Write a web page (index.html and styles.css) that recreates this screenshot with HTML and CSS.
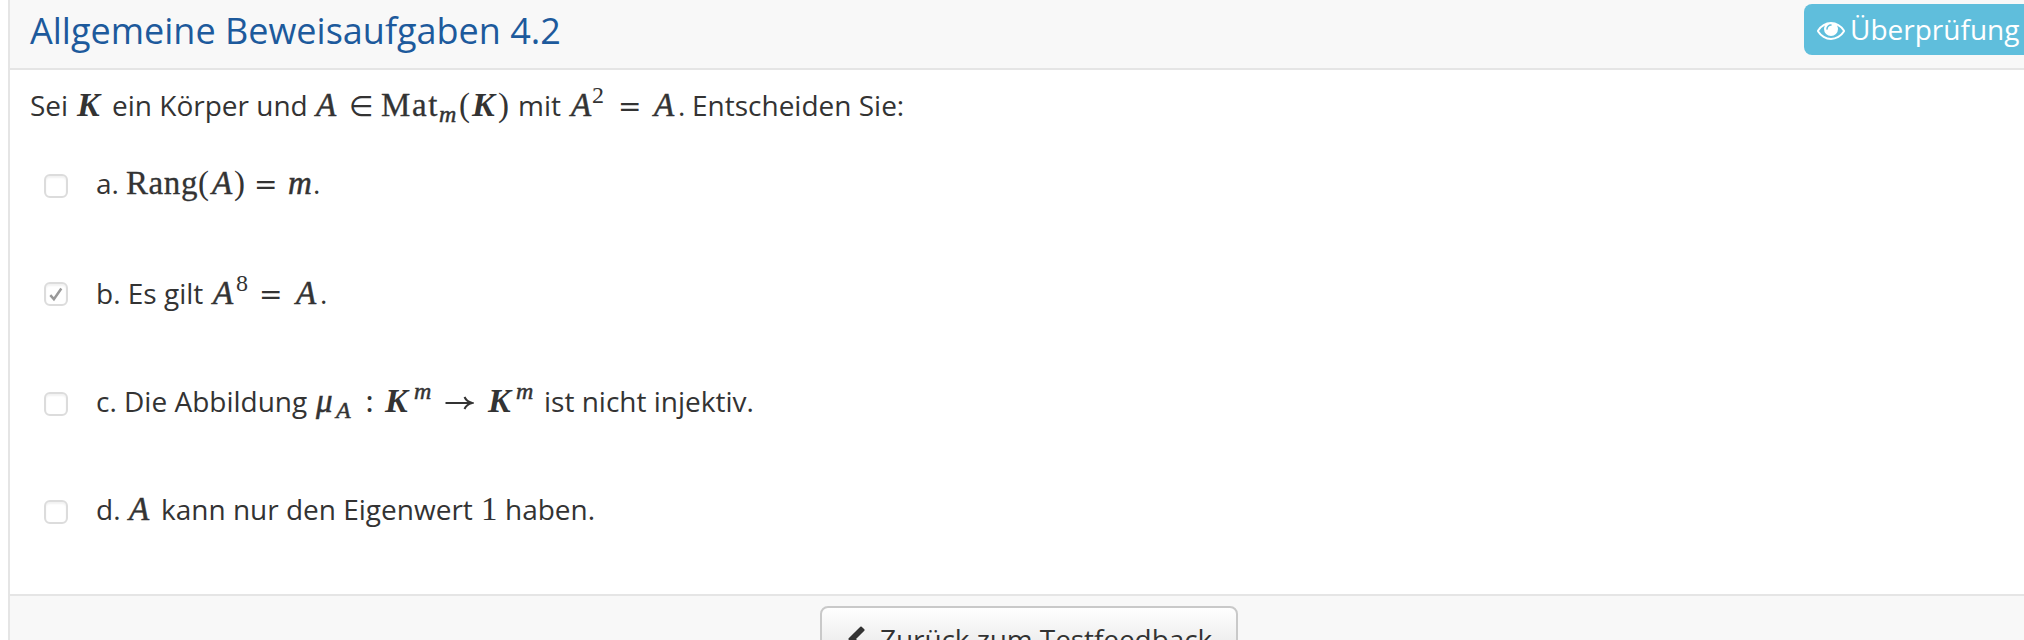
FILE: index.html
```html
<!DOCTYPE html>
<html lang="de">
<head>
<meta charset="utf-8">
<title>Allgemeine Beweisaufgaben 4.2</title>
<link rel="stylesheet" href="styles.css">
</head>
<body>
<main class="panel">
  <header class="panel-head">
    <h1 class="title">Allgemeine Beweisaufgaben 4.2</h1>
    <a class="review"><svg class="eye" viewBox="0 0 1792 1792"><path d="M1664 960q-152-236-381-353 61 104 61 225 0 185-131.5 316.5t-316.5 131.5-316.5-131.5-131.5-316.5q0-121 61-225-229 117-381 353 133 205 333.5 326.5t434.5 121.5 434.5-121.5 333.5-326.5zm-720-384q0-20-14-34t-34-14q-125 0-214.5 89.5t-89.5 214.5q0 20 14 34t34 14 34-14 14-34q0-86 61-147t147-61q20 0 34-14t14-34zm848 384q0 34-20 69-140 230-376.5 368.5t-499.5 138.5-499.5-139-376.5-368q-20-35-20-69t20-69q140-229 376.5-368t499.5-139 499.5 139 376.5 368q20 35 20 69z"/></svg><span class="review-label">Überprüfung</span></a>
  </header>
  <section class="panel-body">
    <p class="line intro"><span>Sei</span><i class="k">K</i><span>ein Körper und</span><i>A</i><b class="op in">∈</b><b class="word mat">Mat</b><i class="sub">m</i><b>(</b><i class="k">K</i><b>)</b><span>mit</span><i>A</i><b class="sup">2</b><b class="op">=</b><i>A</i><span>.</span><span>Entscheiden Sie:</span></p>
    <div class="option"><span class="box"></span>
      <p class="line opt-a"><span>a.</span><b class="word">Rang</b><b>(</b><i>A</i><b>)</b><b class="op">=</b><i>m</i><span>.</span></p></div>
    <div class="option"><span class="box"><svg class="check" viewBox="0 0 24 24"><path d="M6.3 13.2L9.9 17.2L17.3 6.5"/></svg></span>
      <p class="line opt-b"><span>b. Es gilt</span><i>A</i><b class="sup">8</b><b class="op">=</b><i>A</i><span>.</span></p></div>
    <div class="option"><span class="box"></span>
      <p class="line opt-c"><span>c. Die Abbildung</span><i>μ</i><i class="sub">A</i><b>:</b><i class="k">K</i><i class="sup">m</i><svg class="arrow" viewBox="0 0 28 16"><path d="M0 8H26M19 2Q21 6.500 26.500 8Q21 9.500 19 14"/></svg><i class="k">K</i><i class="sup">m</i><span>ist nicht injektiv.</span></p></div>
    <div class="option"><span class="box"></span>
      <p class="line opt-d"><span>d.</span><i>A</i><span>kann nur den Eigenwert</span><b>1</b><span>haben.</span></p></div>
  </section>
  <footer class="panel-foot">
    <a class="back"><svg class="chevron" viewBox="0 0 1792 1792"><path d="M1427 301l-531 531 531 531q19 19 19 45t-19 45l-166 166q-19 19-45 19t-45-19l-742-742q-19-19-19-45t19-45l742-742q19-19 45-19t45 19l166 166q19 19 19 45t-19 45z"/></svg><span class="back-label">Zurück zum Testfeedback</span></a>
  </footer>
</main>
</body>
</html>
```
FILE: styles.css
```css
* { box-sizing: border-box; }
html, body { margin: 0; height: 640px; overflow: hidden; background: #fff; }
body { padding-left: 8px; font-family: "Open Sans", "Noto Sans", sans-serif; font-size: 28px; color: #333; }
.panel { height: 640px; border-left: 2px solid #e5e5e5; display: flex; flex-direction: column; overflow: hidden; }
.panel-head { flex: none; height: 70px; background: #f8f8f8; border-bottom: 2px solid #e5e5e5; display: flex; justify-content: space-between; align-items: flex-start; padding: 4px 0 0 20px; }
.title { margin: 0; font-size: 36px; line-height: 53px; font-weight: 400; color: #1d5a9c; white-space: nowrap; }
.review { width: 220px; flex: none; height: 51px; border-radius: 8px 0 0 8px; background: #5fbedc; color: #fff; display: flex; align-items: center; padding-left: 13px; }
.eye { width: 28px; height: 28px; fill: #fff; margin-right: 5px; }
.review-label { line-height: 51px; white-space: nowrap; }

.panel-body { flex: none; height: 524px; padding: 0 20px; }
.line { margin: 0; display: grid; align-items: baseline; justify-content: start; height: 44px; line-height: 44px; white-space: nowrap; }
.line i, .line b { font-family: "Liberation Serif", serif; font-size: 33px; font-weight: 400; line-height: 44px; }
.line i { -webkit-text-stroke: 0.5px #333; }
.line i.k { font-size: 34px; font-weight: 700; -webkit-text-stroke: 0; }
.line b.word { letter-spacing: 0.6px; -webkit-text-stroke: 0.3px #333; }
.line b.mat { letter-spacing: 1.6px; }
.line .sub, .line .sup { font-size: 24px; line-height: 30px; }
.line .sub { transform: translateY(6px); }
.line .sup { transform: translateY(-13px); }
.line b.sup { margin-left: -1px; }
.line b.op { font-family: "DejaVu Sans", sans-serif; font-size: 28px; }
.arrow { width: 28px; height: 16px; fill: none; stroke: #333; stroke-width: 2; transform: translateY(-1px); }

.intro { margin-top: 13px; height: 67px; grid-template-columns: 47px 35px 204px 33px 32px 58px 20px 13px 26px 20px 53px 22px 25px 36px 24px 14px auto; }
.option { display: flex; align-items: flex-start; height: 109px; padding-left: 14px; }
.option:nth-of-type(even) { height: 108px; }
.option:nth-of-type(1) { height: 108px; }
.option:nth-of-type(2) { height: 110px; }
.box { flex: none; width: 24px; height: 24px; margin: 24px 28px 0 0; border: 2px solid #dcdcdc; border-radius: 6px; background: #fff; box-shadow: inset 0 2px 2px #f2f2f2; }
.option:nth-of-type(3) { height: 108px; }
.check { display: block; width: 24px; height: 24px; margin: -2px; fill: none; stroke: #999; stroke-width: 2.5; }
.option .line { padding-top: 11px; height: 60px; }
.option .opt-b { padding-top: 13px; }
.opt-a { grid-template-columns: 30px 72px 14px 22px 20px 34px 25px auto; }
.opt-b { grid-template-columns: 117px 24px 22px 37px 24px auto; }
.opt-c { grid-template-columns: 220px 20px 29px 20px 29px 31px 43px 28px 28px auto; }
.opt-d { grid-template-columns: 33px 32px 320px 24px auto; }
.opt-c .arrow { width: 29px; }

.panel-foot { flex: 1; min-height: 0; border-top: 2px solid #e5e5e5; background: #f8f8f8; padding: 10px 0 0 810px; }
.back { width: 418px; height: 64px; border: 2px solid #c9c9c9; border-radius: 8px; background: linear-gradient(#fff, #e0e0e0); display: flex; align-items: flex-start; padding: 18px 0 0 20px; text-shadow: 0 2px 2px #fff; white-space: nowrap; }
.back-label { margin-top: -6px; line-height: 38px; letter-spacing: -0.08px; }
.chevron { flex: none; width: 28px; height: 28px; margin-right: 10px; fill: #333; }
```
